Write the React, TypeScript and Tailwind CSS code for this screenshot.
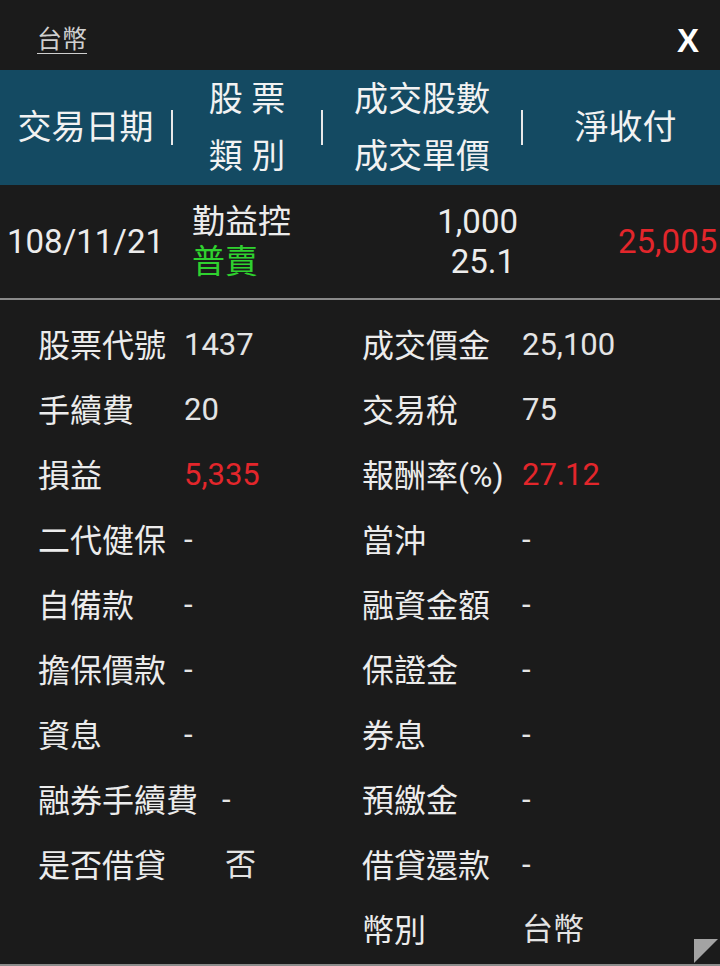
const font = { fontFamily: 'Roboto, "Noto Sans CJK TC", sans-serif' };

type Cell = { label: string; value: string; red?: boolean; gap?: string };

const rows: [Cell | null, Cell][] = [
  [{ label: "股票代號", value: "1437" }, { label: "成交價金", value: "25,100" }],
  [{ label: "手續費", value: "20" }, { label: "交易稅", value: "75" }],
  [{ label: "損益", value: "5,335", red: true }, { label: "報酬率(%)", value: "27.12", red: true }],
  [{ label: "二代健保", value: "-" }, { label: "當沖", value: "-" }],
  [{ label: "自備款", value: "-" }, { label: "融資金額", value: "-" }],
  [{ label: "擔保價款", value: "-" }, { label: "保證金", value: "-" }],
  [{ label: "資息", value: "-" }, { label: "券息", value: "-" }],
  [{ label: "融券手續費", value: "-", gap: "ml-[24px]" }, { label: "預繳金", value: "-" }],
  [{ label: "是否借貸", value: "否", gap: "ml-[59px]" }, { label: "借貸還款", value: "-" }],
  [null, { label: "幣別", value: "台幣" }],
];

function Detail({ cell, labelW }: { cell: Cell | null; labelW: string }) {
  if (!cell) return <div />;
  return (
    <div className="flex items-center whitespace-nowrap">
      <span className={`${cell.gap ? "" : labelW} shrink-0 text-[32px] text-[#ececec]`}>{cell.label}</span>
      <span className={`${cell.gap ?? ""} text-[31px] ${cell.red ? "text-[#e3262b]" : "text-[#e4e4e4]"}`}>
        {cell.value}
      </span>
    </div>
  );
}

export default function App() {
  return (
    <div className="relative w-[720px] h-[966px] overflow-hidden bg-[#1b1b1b]" style={font}>
      {/* top bar */}
      <div className="h-[70px] flex items-center justify-between pt-[10px] pl-[37px] pr-[21px]">
        <span className="text-[25px] text-[#cfcfcf] underline underline-offset-[5px] decoration-1">台幣</span>
        <span
          className="text-[33px] font-bold text-white leading-none"
          style={{ fontFamily: '"Liberation Sans", Arial, sans-serif' }}
        >
          X
        </span>
      </div>

      {/* header */}
      <div className="h-[115px] bg-[#144a62] flex items-center text-[34px] text-[#f2f2f2]">
        <div className="w-[171px] text-center">交易日期</div>
        <div className="w-[2px] h-[35px] bg-[#e8e8e8]" />
        <div className="w-[148px] flex flex-col items-center leading-[57px]">
          <span>股 票</span>
          <span>類 別</span>
        </div>
        <div className="w-[2px] h-[35px] bg-[#e8e8e8]" />
        <div className="w-[198px] flex flex-col items-center leading-[57px]">
          <span>成交股數</span>
          <span>成交單價</span>
        </div>
        <div className="w-[2px] h-[35px] bg-[#e8e8e8]" />
        <div className="flex-1 text-center pl-[8px]">淨收付</div>
      </div>

      {/* data row */}
      <div className="h-[115px] flex items-center text-[33px] text-[#ececec] border-b-2 border-[#8a8a8a]">
        <div className="w-[172px] pl-[7px]">108/11/21</div>
        <div className="w-[150px] pl-[20px] flex flex-col leading-[40px]">
          <span>勤益控</span>
          <span className="text-[#2fd12f]">普賣</span>
        </div>
        <div className="w-[200px] pr-[4px] flex flex-col items-end leading-[40px]">
          <span>1,000</span>
          <span className="pr-[3px]">25.1</span>
        </div>
        <div className="flex-1 pl-[96px] whitespace-nowrap text-[#e3262b]">25,005</div>
      </div>

      {/* details */}
      <div className="pt-[13px] pl-[38px]">
        {rows.map(([l, r], i) => (
          <div key={i} className="h-[65px] grid grid-cols-[324px_1fr] items-center">
            <Detail cell={l} labelW="w-[146px]" />
            <Detail cell={r} labelW="w-[160px]" />
          </div>
        ))}
      </div>

      <div className="absolute left-0 right-0 bottom-0 h-[2px] bg-[#8c8c8c]" />
      <svg className="absolute right-[2px] bottom-[3px]" width="24" height="24" viewBox="0 0 24 24">
        <polygon points="0,0 24,0 0,24" fill="#a3a3a3" />
      </svg>
    </div>
  );
}
